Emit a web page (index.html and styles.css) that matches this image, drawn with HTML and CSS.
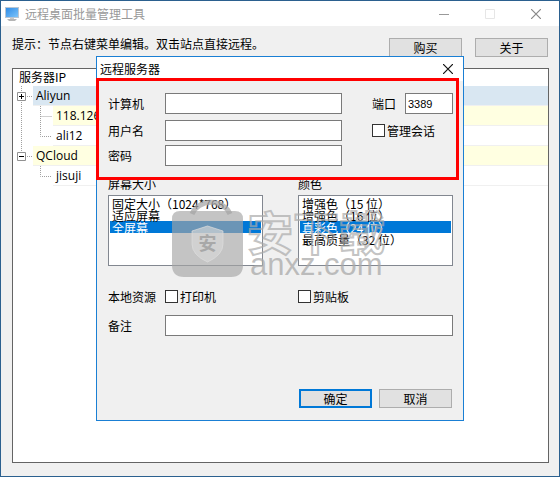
FILE: index.html
```html
<!DOCTYPE html>
<html lang="zh-CN">
<head>
<meta charset="utf-8">
<title>远程桌面批量管理工具</title>
<link rel="stylesheet" href="styles.css">
</head>
<body>
<div class="window">
  <header class="titlebar">
    <svg class="app-icon" width="14" height="14" viewBox="0 0 14 14">
      <defs><linearGradient id="screen" x1="0" y1="0" x2="1" y2="1"><stop offset="0" stop-color="#2f8be6"/><stop offset="1" stop-color="#7cc4fa"/></linearGradient></defs>
      <rect x="0" y="0" width="14" height="11" fill="#b9c6d3"/>
      <rect x="1" y="1" width="12" height="9" fill="url(#screen)"/>
      <path d="M5 11h4v1H5z" fill="#c9c9c9"/><path d="M2 12h10l-2 2H4z" fill="#b5b5b5"/>
    </svg>
    <h1 class="title">远程桌面批量管理工具</h1>
    <div class="controls">
      <svg width="10" height="10" viewBox="0 0 10 10"><path d="M0 5.500h10" stroke="#999"/></svg>
      <svg width="10" height="10" viewBox="0 0 10 10"><path d="M.5.500h9v9h-9z" fill="none" stroke="#e6e6e6"/></svg>
      <svg width="10" height="10" viewBox="0 0 10 10"><path d="M0 0l10 10M10 0L0 10" stroke="#888" stroke-width="1.200"/></svg>
    </div>
  </header>
  <div class="toolbar">
    <p class="hint">提示：节点右键菜单编辑。双击站点直接远程。</p>
    <button type="button" class="btn">购买</button>
    <button type="button" class="btn">关于</button>
  </div>
  <main class="tree">
    <div class="tree-head">服务器IP</div>
    <ul class="rows">
      <li class="row">
        <svg class="lines" width="20" height="20"><path class="dots" d="M8.500 0v20M12 10.500h8"/><path class="box" d="M4.500 6.500h8v8h-8z"/><path class="sign" d="M6 10.500h5M8.500 8v5"/></svg>
        <span class="node selected">Aliyun</span>
      </li>
      <li class="row">
        <svg class="lines" width="40" height="20"><path class="dots" d="M8.500 0v20M27.500 0v20M27.500 10.500h11"/></svg>
        <span class="node group">118.126</span>
      </li>
      <li class="row">
        <svg class="lines" width="40" height="20"><path class="dots" d="M8.500 0v20M27.500 0v10.500h11"/></svg>
        <span class="node">ali12</span>
      </li>
      <li class="row">
        <svg class="lines" width="20" height="20"><path class="dots" d="M8.500 0v10M12 10.500h8"/><path class="box" d="M4.500 6.500h8v8h-8z"/><path class="sign" d="M6 10.500h5"/></svg>
        <span class="node group">QCloud</span>
      </li>
      <li class="row">
        <svg class="lines" width="40" height="20"><path class="dots" d="M27.500 0v10.500h11"/></svg>
        <span class="node">jisuji</span>
      </li>
    </ul>
  </main>
</div>

<form class="dialog">
  <header class="dialog-title">
    <h2 class="title">远程服务器</h2>
    <svg width="10" height="10" viewBox="0 0 10 10"><path d="M0 0l10 10M10 0L0 10" stroke="#111" stroke-width="1.200"/></svg>
  </header>
  <div class="dialog-body">
    <div class="field">
      <label class="name" for="host">计算机</label>
      <input class="text" id="host" type="text">
      <label class="port-name" for="port">端口</label>
      <input class="text port" id="port" type="text" value="3389">
    </div>
    <div class="field second">
      <label class="name" for="user">用户名</label>
      <input class="text" id="user" type="text">
      <label class="check session"><input type="checkbox">管理会话</label>
    </div>
    <div class="field third">
      <label class="name" for="pass">密码</label>
      <input class="text" id="pass" type="password">
    </div>
    <div class="lists">
      <div class="list">
        <label for="size">屏幕大小</label>
        <select id="size" size="5">
          <option>固定大小（1024*768）</option>
          <option>适应屏幕</option>
          <option selected>全屏幕</option>
        </select>
      </div>
      <div class="list">
        <label for="color">颜色</label>
        <select id="color" size="5">
          <option>增强色（15 位）</option>
          <option>增强色（16 位）</option>
          <option selected>真彩色（24 位）</option>
          <option>最高质量（32 位）</option>
        </select>
      </div>
    </div>
    <div class="field local">
      <span class="name">本地资源</span>
      <label class="check printer"><input type="checkbox">打印机</label>
      <label class="check"><input type="checkbox">剪贴板</label>
    </div>
    <div class="field note">
      <label class="name" for="note">备注</label>
      <input class="text wide" id="note" type="text">
    </div>
    <div class="actions">
      <button type="submit" class="btn primary">确定</button>
      <button type="button" class="btn">取消</button>
    </div>
  </div>
  <div class="highlight"></div>
  <svg class="watermark" width="220" height="88" viewBox="0 0 220 88">
    <path d="M20 18a20 17 0 0 1 38 0" fill="none" stroke="#a8a8a8" stroke-opacity=".75" stroke-width="5"/>
    <path fill="#a5a5a5" fill-opacity=".65" d="M8 15h55q8 0 8 8v46q0 12-12 12H12Q0 81 0 69V23q0-8 8-8z"/>
    <path d="M35.500 30l15.500 5v13q0 11-15.500 18Q20 59 20 48V35z" fill="#d8d8d8" fill-opacity=".65" stroke="#ddd" stroke-opacity=".7"/>
    <text class="mark-badge" x="35.500" y="54" text-anchor="middle">安</text>
    <text class="mark-cn" x="75" y="54">安下载</text>
    <text class="mark-url" x="78" y="79">anxz.com</text>
  </svg>
</form>
</body>
</html>
```
FILE: styles.css
```css
* { box-sizing: border-box; }

body {
  margin: 0;
  position: relative;
  min-height: 100vh;
  font: 12px/16px "Noto Sans CJK SC", sans-serif;
  color: #000;
}

h1, h2, p, ul { margin: 0; padding: 0; }
.title { flex: 1; font-size: 12px; font-weight: 400; }

.window {
  display: flex;
  flex-direction: column;
  min-height: 100vh;
  border: 1px solid #2b608f;
  background: #f0f0f0;
}

.titlebar {
  display: flex;
  align-items: center;
  height: 25px;
  padding: 0 18px 0 4px;
  background: #fff;
  color: #999;
}
.app-icon { margin-right: 6px; }
.controls { display: flex; gap: 36px; }

.toolbar {
  display: flex;
  align-items: flex-start;
  gap: 13px;
  padding: 12px 11px 11px;
}
.hint { flex: 1; line-height: 12px; }

.btn {
  width: 73px;
  height: 19px;
  padding: 0;
  border: 1px solid #adadad;
  background: #e1e1e1;
  font: inherit;
  line-height: 16px;
  color: #000;
}
.primary { border: 2px solid #0078d7; line-height: 14px; }

.tree {
  flex: 1;
  margin: 0 10px 13px 11px;
  border: 1px solid #646464;
  background: #fff;
}
.tree-head { height: 17px; padding-left: 6px; }
.rows { list-style: none; }
.row { display: flex; height: 20px; }
.lines { flex: none; }
.node {
  flex: 1;
  padding-left: 3px;
  border-bottom: 1px solid #f0f0f0;
  font: 12px/19px "Open Sans", sans-serif;
}
.selected { background: #d9e7f2; }
.group { background: #ffffe1; }
.dots { fill: none; stroke: #a0a0a0; stroke-dasharray: 1 1; }
.box { fill: #fff; stroke: #919191; }
.sign { stroke: #000; }

.dialog {
  position: absolute;
  top: 56px;
  left: 96px;
  right: 96px;
  border: 1px solid #1a7fd4;
  background: #f0f0f0;
}
.dialog-title {
  display: flex;
  align-items: center;
  height: 24px;
  padding: 0 10px 0 3px;
  background: #fff;
}
.dialog-body { padding: 12px 10px 12px 11px; }

.field { display: flex; align-items: center; height: 21px; }
.second { margin-top: 6px; }
.third { margin-top: 4px; }
.name { flex: none; width: 57px; }

.text {
  width: 177px;
  height: 21px;
  padding: 0 2px;
  border: 1px solid #7a7a7a;
  border-radius: 0;
  background: #fff;
  font: inherit;
  line-height: 16px;
}
.port-name { width: 33px; margin-left: 30px; }
.text.port { flex: 1; width: 48px; min-width: 0; font-family: "Liberation Sans", sans-serif; font-size: 11px; }
.wide { flex: 1; }

.check { display: flex; align-items: center; gap: 2px; }
.check input {
  appearance: none;
  width: 13px;
  height: 13px;
  margin: 0;
  border: 1px solid #333;
  background: #fff;
}
.session { margin-left: 30px; }
.printer { width: 133px; }

.lists { display: flex; gap: 35px; margin-top: 10px; }
.list { flex: 1; min-width: 0; }
.list label { display: block; margin-bottom: 3px; }
.list select {
  display: block;
  width: 100%;
  height: 71px;
  padding: 1px;
  border: 1px solid #828790;
  border-radius: 0;
  background: #fff;
  font: inherit;
  line-height: 12px;
  overflow: hidden;
}
.list option {
  display: flex;
  align-items: center;
  height: 12px;
  min-height: 12px;
  padding: 0 2px;
  line-height: 12px;
  overflow: visible;
  color: #000;
}
.list option:checked {
  background-image: linear-gradient(#0078d7, #0078d7);
  -webkit-text-fill-color: #fff;
}

.local { margin-top: 20px; }
.note { margin-top: 8px; }
.actions { display: flex; justify-content: flex-end; gap: 7px; margin-top: 53px; padding-right: 1px; }

.highlight {
  position: absolute;
  top: 21px;
  left: -1px;
  right: 4px;
  height: 102px;
  border: 3px solid #f00;
}

.watermark {
  position: absolute;
  top: 139px;
  left: 75px;
  pointer-events: none;
}
.mark-badge { font-size: 18px; font-weight: 700; fill: #a8a8a8; }
.mark-cn { font-size: 46px; font-weight: 700; fill: none; stroke: #aaa; stroke-opacity: .7; stroke-width: 2px; }
.mark-url { font: 31px "Liberation Sans", sans-serif; fill: #aaa; fill-opacity: .75; }
```
